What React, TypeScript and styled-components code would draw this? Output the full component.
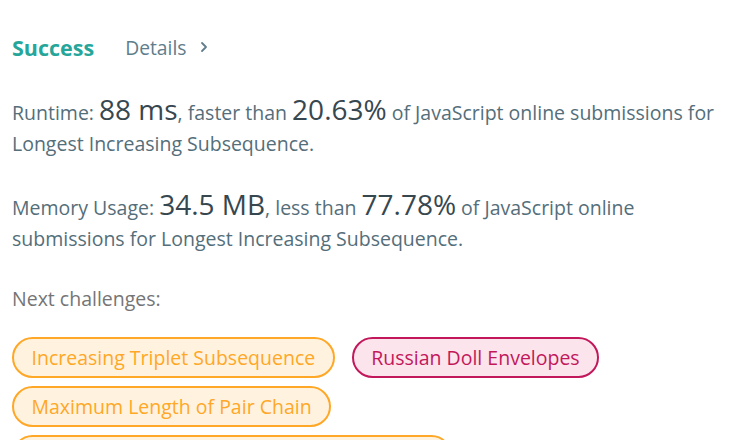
import React from "react";
import styled, { createGlobalStyle } from "styled-components";

const Global = createGlobalStyle`
  html, body { margin: 0; padding: 0; background: #fff; overflow: hidden; }
  body { font-family: "Open Sans", "Noto Sans", sans-serif; }
`;

const Page = styled.div`
  padding: 30px 8px 0 12px;
  width: 732px;
  box-sizing: border-box;
`;

const Header = styled.div`
  display: flex;
  align-items: center;
  gap: 31px;
  height: 34px;
`;

const Status = styled.span`
  font-size: 21.5px;
  font-weight: 700;
  color: #26a69a;
`;

const DetailsLink = styled.span`
  display: inline-flex;
  align-items: center;
  gap: 12px;
  font-size: 19.3px;
  color: #607d8b;
`;

const Stat = styled.p`
  margin: 0;
  font-size: 19.5px;
  line-height: 31px;
  color: #546e7a;
  & + & { margin-top: 31px; }
`;

const StatsBlock = styled.div`
  margin-top: 31px;
`;

const Big = styled.span`
  font-size: 28px;
  line-height: 1;
  color: #37474f;
`;

const NextLabel = styled.div`
  margin-top: 29px;
  font-size: 19.5px;
  line-height: 31px;
  color: #757575;
`;

const Pills = styled.div`
  display: flex;
  flex-wrap: wrap;
  gap: 8px 17px;
  margin-top: 23px;
`;

const Pill = styled.a<{ $tone: "medium" | "hard" }>`
  display: inline-flex;
  align-items: center;
  height: 41px;
  box-sizing: border-box;
  padding: 0 17.5px;
  border-radius: 21px;
  font-size: 19.5px;
  text-decoration: none;
  white-space: nowrap;
  border: 2px solid ${(p) => (p.$tone === "hard" ? "#c2185b" : "#ffa726")};
  background: ${(p) => (p.$tone === "hard" ? "#fce4ec" : "#fff3e0")};
  color: ${(p) => (p.$tone === "hard" ? "#c2185b" : "#ffa726")};
`;

const Chevron = () => (
  <svg width="10" height="12" viewBox="0 0 10 12" fill="none">
    <path d="M3 2l4 4-4 4" stroke="#607d8b" strokeWidth="1.8" strokeLinecap="round" strokeLinejoin="round" />
  </svg>
);

const challenges: { name: string; tone: "medium" | "hard" }[] = [
  { name: "Increasing Triplet Subsequence", tone: "medium" },
  { name: "Russian Doll Envelopes", tone: "hard" },
  { name: "Maximum Length of Pair Chain", tone: "medium" },
  { name: "Number of Longest Increasing Subsequence", tone: "medium" },
];

export default function App() {
  return (
    <Page>
      <Global />
      <Header>
        <Status>Success</Status>
        <DetailsLink>
          Details <Chevron />
        </DetailsLink>
      </Header>
      <StatsBlock>
        <Stat>
          Runtime: <Big>88 ms</Big>, faster than <Big>20.63%</Big> of JavaScript online submissions for Longest
          Increasing Subsequence.
        </Stat>
        <Stat>
          Memory Usage: <Big>34.5 MB</Big>, less than <Big>77.78%</Big> of JavaScript online submissions for Longest
          Increasing Subsequence.
        </Stat>
      </StatsBlock>
      <NextLabel>Next challenges:</NextLabel>
      <Pills>
        {challenges.map((c) => (
          <Pill key={c.name} $tone={c.tone}>
            {c.name}
          </Pill>
        ))}
      </Pills>
    </Page>
  );
}
